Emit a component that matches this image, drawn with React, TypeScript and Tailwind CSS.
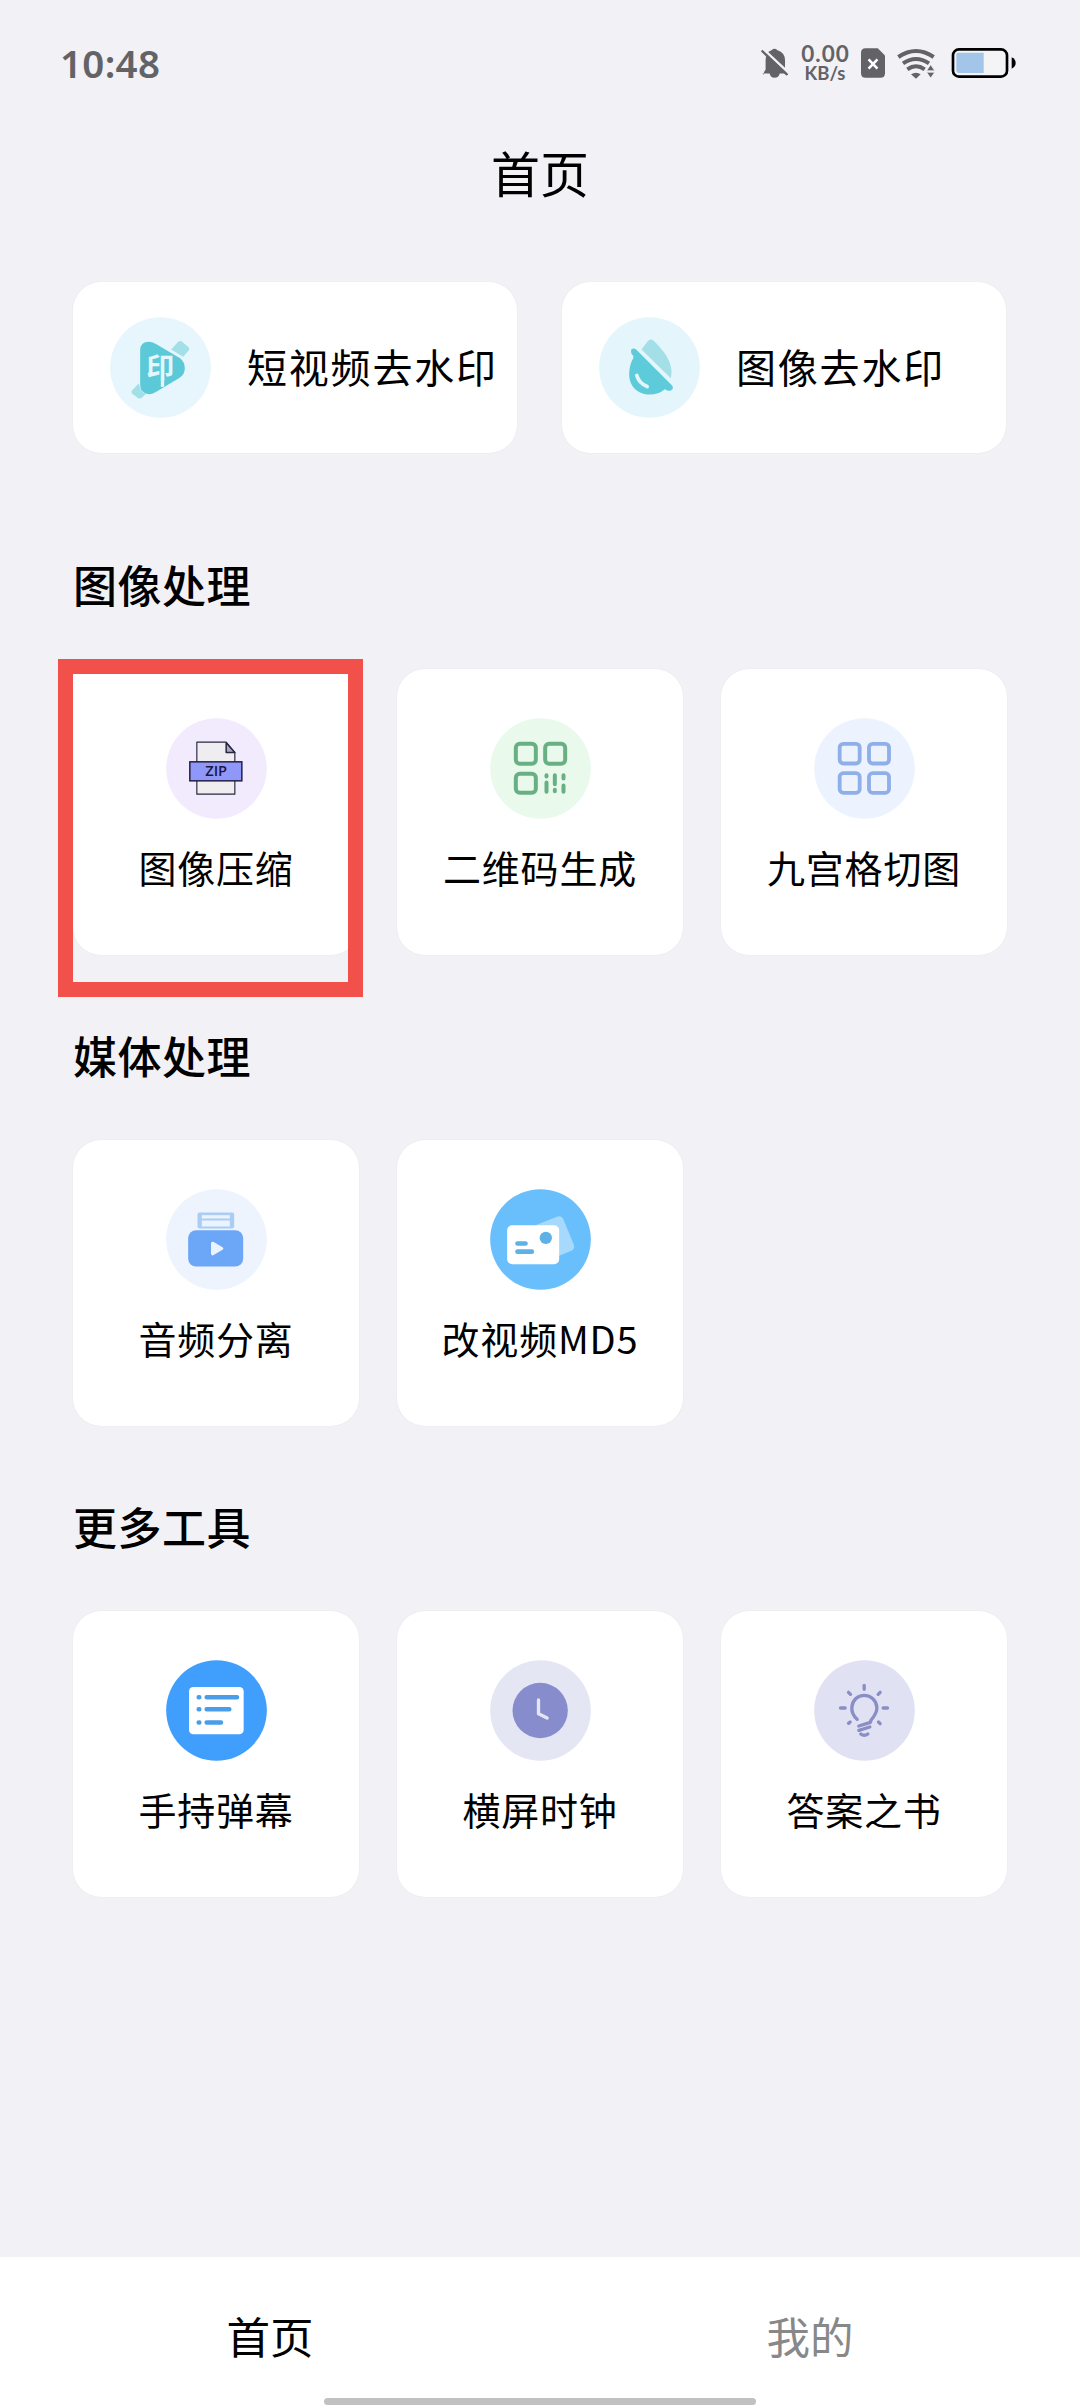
import type { ReactNode } from "react";

/* Round 101px badge; children are drawn in a 303-unit square centred on (cx, cy). */
function Badge({ cx, cy, bg, children }: { cx: number; cy: number; bg: string; children: ReactNode }) {
  return (
    <svg
      className="h-[101px] w-[101px] shrink-0"
      viewBox={`${cx - 151.5} ${cy - 151.5} 303 303`}
      fill="none"
      strokeLinecap="round"
      strokeLinejoin="round"
    >
      <circle cx={cx} cy={cy} r="151" fill={bg} />
      {children}
    </svg>
  );
}

const VideoWatermarkIcon = () => (
  <Badge cx={299} cy={296} bg="#e6f6fc">
    <path d="M331 242 L352 219 Q358 214 364 219 L383 235 Q388 240 383 246 L367 264 Z" fill="#a3dfe7" />
    <path d="M233 344 L213 366 Q210 371 214 375 L232 388 Q238 391 243 387 L256 375 Q238 370 236 350 Z" fill="#a3dfe7" />
    <path
      d="M238 245 Q238 219 264 219 Q274 219 284 225 L358 268 Q372 280 372 298 Q372 318 354 328 L284 370 Q274 376 264 376 Q238 374 238 348 Z"
      fill="#5cc9d9"
    />
    <text x="256" y="327" fontSize="84" fontWeight="700" fill="#e6f6fc" fontFamily="Noto Sans CJK SC, sans-serif">印</text>
    <path d="M305 330 V354" stroke="#e6f6fc" strokeWidth="10" strokeLinecap="butt" />
  </Badge>
);

const ImageWatermarkIcon = () => (
  <Badge cx={295} cy={296} bg="#e4f6fb">
    <path d="M271 242 L289 218 Q299 206 310 218 C338 246 361 277 361 308 Q361 318 359 328 Z" fill="#a3dfe7" />
    <path
      d="M255 242 L362 349 Q368 356 363 362 Q357 368 347 364 L341 361 Q322 377 296 377 C260 377 234 352 234 316 Q234 290 246 268 L247 262 L241 255 Q237 247 241 241 Q248 236 255 242 Z"
      fill="#5ecbdb"
    />
    <path d="M257 320 Q264 344 288 353" stroke="#e4f6fb" strokeWidth="11" />
  </Badge>
);

const ZipIcon = () => (
  <Badge cx={529} cy={386} bg="#f2ebfd">
    <path d="M470 307 H558 L584 338 V463 H470 Z" fill="#efedef" stroke="#2b2640" strokeWidth="3.5" />
    <path d="M558 309 V338 H584 Z" fill="#aaa6c4" stroke="#2b2640" strokeWidth="4.5" />
    <rect x="449" y="366" width="156" height="57" fill="#8f97f8" stroke="#231f45" strokeWidth="4.5" strokeLinejoin="miter" />
    <text x="528" y="410" fontSize="44" fontWeight="600" textAnchor="middle" fill="#1b1740" fontFamily="Open Sans, sans-serif">ZIP</text>
  </Badge>
);

const QrIcon = () => (
  <Badge cx={449} cy={326} bg="#e9faec">
    <g stroke="#68b084" strokeWidth="12">
      <rect x="375" y="252" width="60" height="60" rx="12" />
      <rect x="463" y="252" width="60" height="60" rx="12" />
      <rect x="375" y="342" width="60" height="57" rx="12" />
      <path d="M467 346 V350 M467 368 V396 M492 346 V373 M492 390 V394 M518 346 V356 M518 377 V396" />
    </g>
  </Badge>
);

const GridIcon = () => (
  <Badge cx={461} cy={326} bg="#edf3fe">
    <g stroke="#8fafe8" strokeWidth="11.500">
      <rect x="386.500" y="252" width="60" height="59" rx="11" />
      <rect x="474.500" y="252" width="60" height="59" rx="11" />
      <rect x="386.500" y="340" width="60" height="59" rx="11" />
      <rect x="474.500" y="340" width="60" height="59" rx="11" />
    </g>
  </Badge>
);

const AudioIcon = () => (
  <Badge cx={469} cy={327} bg="#edf4fe">
    <rect x="412" y="246" width="110" height="48" rx="6" fill="#abcdf4" />
    <rect x="425" y="254" width="84" height="10" fill="#ebf3fe" />
    <rect x="425" y="270" width="84" height="18" fill="#ebf3fe" />
    <rect x="384" y="299" width="165" height="109" rx="24" fill="#6ca6f6" />
    <path d="M457 338 L485 354 L457 370 Z" fill="#eaf3fe" stroke="#eaf3fe" strokeWidth="9" />
  </Badge>
);

const CardsIcon = () => (
  <Badge cx={449} cy={328} bg="#69bffb">
    <path d="M432 286 L500 259 Q512 255 517 266 L549 344 Q553 356 542 362 L500 379 Z" fill="#a6d9fb" />
    <rect x="349" y="285" width="156" height="117" rx="15" fill="#fff" />
    <circle cx="465" cy="323" r="18.500" fill="#5db1e6" />
    <path d="M380 340 H404 M380 364.500 H423" stroke="#5db1e6" strokeWidth="14" />
  </Badge>
);

const BarrageIcon = () => (
  <Badge cx={466.5} cy={331.5} bg="#409ffd">
    <rect x="384" y="261" width="164" height="142" rx="13" fill="#fff" />
    <g stroke="#4a9ee9" strokeWidth="13.500">
      <path d="M413 292 H415 M437 292 H528" />
      <path d="M413 327.500 H415 M437 327.500 H505" />
      <path d="M413 367.500 H415 M437 367.500 H480" />
    </g>
  </Badge>
);

const ClockIcon = () => (
  <Badge cx={1439} cy={331.5} bg="#e5e6f4">
    <circle cx="1438" cy="331.500" r="83" fill="#878ccd" />
    <path d="M1433 300 V341 L1459 354" stroke="#e5e6f4" strokeWidth="10" />
  </Badge>
);

const BulbIcon = () => (
  <Badge cx={461} cy={331.5} bg="#e0e2f3">
    <g stroke="#8a8ec5" strokeWidth="10">
      <path d="M439 358 C425 345 422 335 423 322 C425 300 441 286 460 286 C481 286 497 302 498 322 C499 336 492 346 484 356 Q479 361 479 367 L444 378" />
      <path d="M477 381 L444 391 M450 402 Q460 410 471 402" />
      <path d="M460 256 V268 M413 277 L419 283 M508 277 L502 283 M389 324 H403 M517 324 H530 M413 370 L418 366 M503 366 L508 371" />
    </g>
  </Badge>
);

function StatusBar() {
  return (
    <div className="flex h-[126px] items-center pl-[60px] text-[#636367]">
      <div className="w-[701px] font-['Noto_Sans',sans-serif] text-[38.500px] font-semibold leading-none tracking-[0.3px]">10:48</div>
      <svg className="h-[40px] w-[27px]" viewBox="68 42 82 120" fill="none">
        <path d="M77 138 V130 L82 122 V92 Q82 68 100 63 Q109 54 118 63 Q141 70 141 94 V122 L147 131 V134 L125 134 Q122 147 109 147 Q97 147 94 134 H72 Z" fill="#636367" />
        <path d="M74 59 L153 133" stroke="#f1f1f6" strokeWidth="8" />
        <path d="M70 64 L148 138" stroke="#636367" strokeWidth="7" />
      </svg>
      <div className="ml-[11px] flex w-[52px] flex-col items-center whitespace-nowrap font-['Lato',sans-serif] font-bold">
        <span className="-mr-[1px] text-[22.500px] leading-[20px] tracking-[1px]">0.00</span>
        <span className="text-[18.500px] leading-[19px]">KB/s</span>
      </div>
      <svg className="ml-[10px] h-[40px] w-[24px]" viewBox="365 42 73 120" fill="none">
        <path d="M379 57 H416 L438 79 V133 Q438 147 424 147 H379 Q365 147 365 133 V71 Q365 57 379 57 Z" fill="#636367" />
        <path d="M388 91 L415 119 M415 91 L388 119" stroke="#fff" strokeWidth="8" />
      </svg>
      <svg className="ml-[12px] h-[40px] w-[38px]" viewBox="472 42 114 120" fill="none">
        <g stroke="#636367" strokeWidth="12">
          <path d="M476 84 Q529 48 582 84" />
          <path d="M490 103 Q529 77 568 103" />
          <path d="M503 121 Q529 103 555 121" />
        </g>
        <path d="M514 136 Q529 127 543 136 L529 149 Z" fill="#636367" />
        <path d="M561 125 L573 107 L585 125 Z M561 130 H585 L573 147 Z" fill="#636367" stroke="#f1f1f6" strokeWidth="2" />
      </svg>
      <svg className="ml-[16px] h-[40px] w-[65px]" viewBox="634 42 195 120" fill="none">
        <rect x="640" y="61" width="162" height="82" rx="18" fill="#f4f4f6" stroke="#000" strokeWidth="8" />
        <path d="M654 71 H732 V132 H658 Q650 132 650 124 V76 Q650 71 654 71 Z" fill="#a4c5ea" />
        <path d="M816 85 Q828 91 828 102 Q828 113 816 119 Z" fill="#000" />
      </svg>
    </div>
  );
}

function WideCard({ icon, label }: { icon: ReactNode; label: string }) {
  return (
    <div className="flex h-[171px] w-[444px] items-center rounded-[28px] bg-white pl-[37px] shadow-[0_0_2px_rgba(0,0,0,0.06)]">
      {icon}
      <span className="-mt-[4px] ml-[36px] whitespace-nowrap text-[40px] leading-[56px] tracking-[1.800px]">{label}</span>
    </div>
  );
}

type Tool = { icon: ReactNode; label: string; marked?: boolean };

function ToolCard({ icon, label, marked }: Tool) {
  return (
    <div
      className={`relative flex h-[286px] w-[286px] flex-col items-center bg-white pt-[49px] shadow-[0_0_2px_rgba(0,0,0,0.06)] ${
        marked ? "rounded-t-[4px] rounded-b-[28px]" : "rounded-[28px]"
      }`}
    >
      {icon}
      <span className="mt-[20px] whitespace-nowrap text-[38px] leading-[56px] tracking-[0.800px]">{label}</span>
      {marked && <div className="absolute -left-[15px] -top-[10px] h-[338px] w-[305px] border-[15px] border-[#f1504b]" />}
    </div>
  );
}

function Section({ title, tools }: { title: string; tools: Tool[] }) {
  return (
    <section className="h-[471px]">
      <h2 className="mb-[55px] h-[60px] text-[44px] font-medium leading-[60px] tracking-[0.500px]">{title}</h2>
      <div className="flex gap-[38px]">
        {tools.map((tool) => (
          <ToolCard key={tool.label} {...tool} />
        ))}
      </div>
    </section>
  );
}

export default function App() {
  return (
    <div className="flex h-[2408px] w-[1080px] flex-col overflow-hidden bg-[#f1f1f6] font-['Noto_Sans_CJK_SC',sans-serif] text-black">
      <StatusBar />
      <header className="flex h-[90px] items-center justify-center text-[49px] leading-none">首页</header>
      <main className="flex-1 px-[73px] pt-[66px]">
        <div className="mb-[101px] flex gap-[45px]">
          <WideCard icon={<VideoWatermarkIcon />} label="短视频去水印" />
          <WideCard icon={<ImageWatermarkIcon />} label="图像去水印" />
        </div>
        <Section
          title="图像处理"
          tools={[
            { icon: <ZipIcon />, label: "图像压缩", marked: true },
            { icon: <QrIcon />, label: "二维码生成" },
            { icon: <GridIcon />, label: "九宫格切图" },
          ]}
        />
        <Section
          title="媒体处理"
          tools={[
            { icon: <AudioIcon />, label: "音频分离" },
            { icon: <CardsIcon />, label: "改视频MD5" },
          ]}
        />
        <Section
          title="更多工具"
          tools={[
            { icon: <BarrageIcon />, label: "手持弹幕" },
            { icon: <ClockIcon />, label: "横屏时钟" },
            { icon: <BulbIcon />, label: "答案之书" },
          ]}
        />
      </main>
      <nav className="flex h-[151px] flex-col items-center bg-white">
        <div className="flex h-[141px] w-full pt-[49px] text-center text-[43.500px] leading-[60px]">
          <span className="flex-1">首页</span>
          <span className="flex-1 text-[#888888]">我的</span>
        </div>
        <div className="h-[7px] w-[432px] rounded-full bg-[#c1c1c1]" />
      </nav>
    </div>
  );
}
